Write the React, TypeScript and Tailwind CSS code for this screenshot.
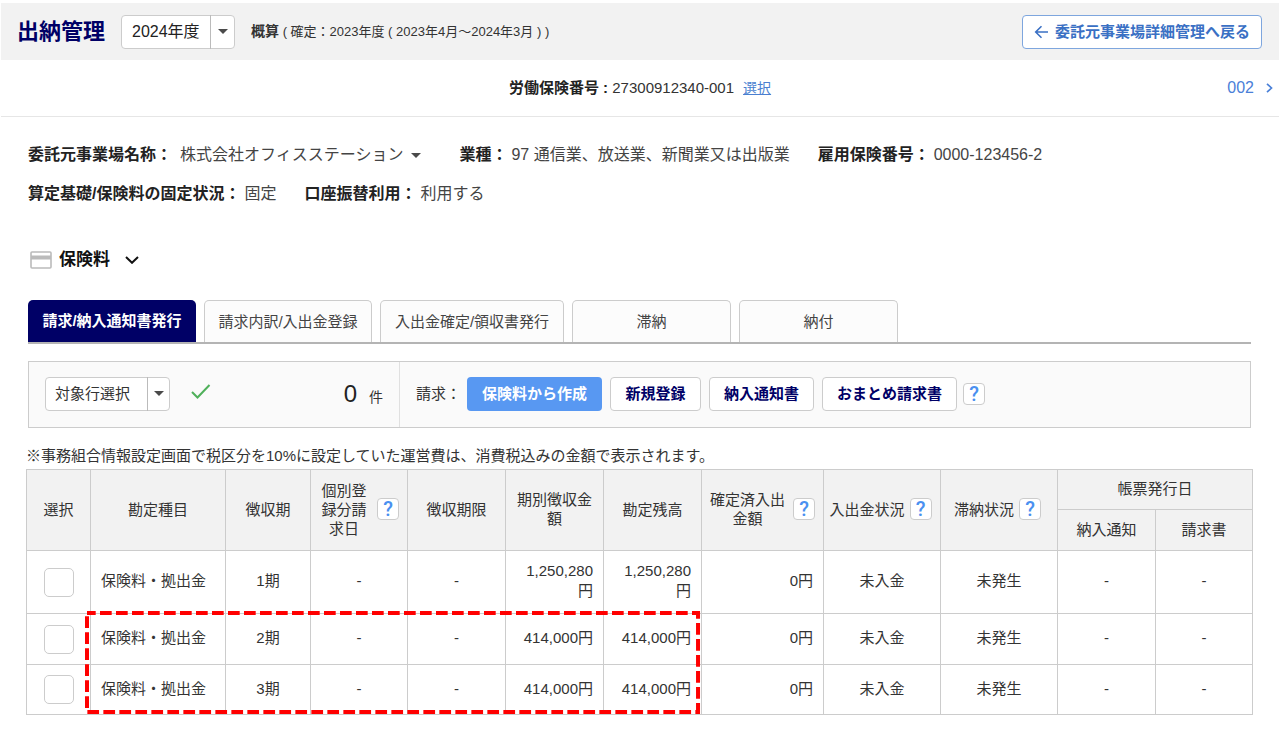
import type { ReactNode } from "react";

const rows = [
  { term: "1期", amount: "1,250,280円", balance: "1,250,280円", height: "h-[63px]" },
  { term: "2期", amount: "414,000円", balance: "414,000円", height: "h-[51px]" },
  { term: "3期", amount: "414,000円", balance: "414,000円", height: "h-[50px]" },
];

const tabs = [
  { label: "請求/納入通知書発行", width: "w-[168px]", active: true },
  { label: "請求内訳/入出金登録", width: "w-[168px]", active: false },
  { label: "入出金確定/領収書発行", width: "w-[184px]", active: false },
  { label: "滞納", width: "w-[159px]", active: false },
  { label: "納付", width: "w-[159px]", active: false },
];

function Caret() {
  return (
    <svg width="10" height="5" viewBox="0 0 10 5" aria-hidden="true">
      <path d="M0 0h10L5 5z" fill="#4a4a4a" />
    </svg>
  );
}

function Picker({ label, value, width, caretWidth, text }: { label: string; value: string; width: string; caretWidth: string; text: string }) {
  return (
    <div className={`relative shrink-0 ${width}`}>
      <select aria-label={label} className={`block h-[34px] w-full appearance-none rounded border border-[#cccccc] bg-white leading-6 ${text}`}>
        <option>{value}</option>
      </select>
      <span className={`pointer-events-none absolute inset-y-0 right-0 flex items-center justify-center border-l border-[#bbbbbb] ${caretWidth}`}>
        <Caret />
      </span>
    </div>
  );
}

function Help() {
  return (
    <button type="button" aria-label="ヘルプ" className="flex h-[22px] w-[22px] shrink-0 items-center justify-center rounded border border-[#cccccc] bg-white font-[Roboto,sans-serif] text-[20px] leading-5 font-medium text-[#4a90f0]">
      ?
    </button>
  );
}

function Field({ label, children }: { label: string; children: ReactNode }) {
  return (
    <div className="flex items-center gap-1">
      <dt className="font-bold text-[#222222]">{label}</dt>
      <dd className="flex items-center text-[#444444]">{children}</dd>
    </div>
  );
}

function ActionButton({ children, width }: { children: ReactNode; width: string }) {
  return (
    <button type="button" className={`h-[34px] rounded border border-[#cccccc] bg-white font-bold text-[#000066] ${width}`}>
      {children}
    </button>
  );
}

function Th({ children, help, rowSpan = 2, colSpan = 1 }: { children: ReactNode; help?: boolean; rowSpan?: number; colSpan?: number }) {
  return (
    <th rowSpan={rowSpan} colSpan={colSpan} className={`border border-[#cccccc] bg-[#f2f2f2] pt-0 pb-[2px] text-center font-normal leading-[19px] ${help ? "pr-2 pl-[5px]" : "px-2"}`}>
      {help ? (
        <div className="flex items-center justify-center gap-[5px]">
          <span>{children}</span>
          <Help />
        </div>
      ) : (
        children
      )}
    </th>
  );
}

function Td({ children, align = "text-center" }: { children: ReactNode; align?: string }) {
  return <td className={`border border-[#cccccc] px-[10px] pt-0 pb-[2px] leading-5 ${align}`}>{children}</td>;
}

export default function App() {
  return (
    <div className="min-h-screen bg-white font-['Liberation_Sans','Noto_Sans_CJK_JP',sans-serif] text-[15px] leading-5 text-[#333333]">
      <header className="mx-px flex h-[60px] items-center border-t-[3px] border-white bg-[#f2f2f2] pr-[17px] pl-4">
        <h1 className="mr-4 text-[22px] leading-7 font-bold text-[#000066]">出納管理</h1>
        <Picker label="年度" value="2024年度" width="w-[114px]" caretWidth="w-[25px]" text="pl-[10px] text-[16px] text-[#222222]" />
        <p className="ml-4 text-[13px]">
          <b className="text-[14px]">概算</b> ( 確定：2023年度 ( 2023年4月～2024年3月 ) )
        </p>
        <a href="#detail" className="ml-auto flex h-[34px] items-center gap-[6px] rounded border border-[#7ea6de] bg-white px-[11px] font-bold text-[#3a70c4]">
          <svg width="15" height="14" viewBox="0 0 15 14" fill="none" stroke="currentColor" strokeWidth="1.6" aria-hidden="true">
            <path d="M14 7H2M7.5 1.2 1.7 7l5.8 5.8" />
          </svg>
          委託元事業場詳細管理へ戻る
        </a>
      </header>

      <nav className="mx-px grid h-[57px] grid-cols-[1fr_auto_1fr] items-center border-b border-[#e6e6e6]">
        <p className="col-start-2">
          <b className="text-[#222222]">労働保険番号 : </b>27300912340-001
          <a href="#select" className="ml-[9px] text-[14px] text-[#4a7fd0] underline">選択</a>
        </p>
        <a href="#next" className="flex items-center gap-3 justify-self-end pr-[6px] text-[16px] text-[#4a80d8]">
          002
          <svg width="7" height="10" viewBox="0 0 7 10" fill="none" stroke="currentColor" strokeWidth="1.7" aria-hidden="true">
            <path d="m1 .8 4.500 4.200L1 9.200" />
          </svg>
        </a>
      </nav>

      <main>
        <dl className="flex flex-col gap-[19px] px-7 pt-7 text-[16px]">
          <div className="flex gap-7">
            <Field label="委託元事業場名称：">
              <button type="button" className="flex items-center gap-2 pr-[10px] pl-1">
                株式会社オフィスステーション
                <Caret />
              </button>
            </Field>
            <Field label="業種：">97 通信業、放送業、新聞業又は出版業</Field>
            <Field label="雇用保険番号：">0000-123456-2</Field>
          </div>
          <div className="flex gap-7">
            <Field label="算定基礎/保険料の固定状況：">固定</Field>
            <Field label="口座振替利用：">利用する</Field>
          </div>
        </dl>

        <h2 className="mt-11 flex h-6 items-center px-[30px] text-[17px] font-bold text-[#111111]">
          <svg width="22" height="18" viewBox="0 0 22 18" fill="none" stroke="#bbbbbb" aria-hidden="true">
            <rect x="1" y="1" width="20" height="16" rx="1" strokeWidth="1.6" />
            <path d="M1 6.5h20" strokeWidth="4" />
          </svg>
          <span className="ml-[7px]">保険料</span>
          <button type="button" aria-label="保険料を開閉" className="ml-[15px]">
            <svg width="14" height="8" viewBox="0 0 14 8" fill="none" stroke="currentColor" strokeWidth="2" aria-hidden="true">
              <path d="m1 1 6 5.8L13 1" />
            </svg>
          </button>
        </h2>

        <div role="tablist" className="mt-7 mr-[29px] ml-7 flex gap-2 border-b-2 border-[#b4b4b4]">
          {tabs.map((tab) => (
            <button
              key={tab.label}
              type="button"
              role="tab"
              aria-selected={tab.active}
              className={`h-[42px] rounded-t-[5px] ${tab.width} ${tab.active ? "bg-[#000066] font-bold text-white" : "border border-b-0 border-[#cccccc] bg-[#fcfcfc] text-[#444444]"}`}
            >
              {tab.label}
            </button>
          ))}
        </div>

        <section className="mt-[17px] mr-[29px] ml-7 flex h-[67px] items-stretch border border-[#cccccc] bg-[#fafafa]">
          <div className="flex w-[371px] items-center border-r border-[#e0e0e0] px-4 pb-[2px]">
            <Picker label="対象行" value="対象行選択" width="w-[125px]" caretWidth="w-[23px]" text="pl-[9px] text-[15px] text-[#333333]" />
            <svg className="mb-1 ml-[21px]" width="20" height="15" viewBox="0 0 20 15" fill="none" stroke="#4fb05a" strokeWidth="2" aria-hidden="true">
              <path d="m1 8 5.500 5.500L18.500 1" />
            </svg>
            <p className="ml-auto flex items-baseline gap-3 text-[14px]">
              <span className="text-[24px] leading-7 text-[#222222]">0</span>件
            </p>
          </div>
          <div className="flex items-center gap-[6px] pb-[2px] pl-4">
            <span className="w-[45px] whitespace-nowrap">請求：</span>
            <div className="flex gap-2">
              <button type="button" className="h-[34px] w-[135px] rounded bg-[#5898f2] font-bold text-white">保険料から作成</button>
              <ActionButton width="w-[91px]">新規登録</ActionButton>
              <ActionButton width="w-[105px]">納入通知書</ActionButton>
              <ActionButton width="w-[135px]">おまとめ請求書</ActionButton>
            </div>
            <Help />
          </div>
        </section>

        <div className="mr-[27px] ml-[26px]">
          <p className="mt-[18px] mb-[3px]">※事務組合情報設定画面で税区分を10%に設定していた運営費は、消費税込みの金額で表示されます。</p>
          <div className="relative">
            <table className="w-full table-fixed border-collapse">
              <colgroup>
                <col className="w-[64px]" />
                <col className="w-[135px]" />
                <col className="w-[85px]" />
                <col className="w-[97px]" />
                <col className="w-[98px]" />
                <col className="w-[98px]" />
                <col className="w-[98px]" />
                <col className="w-[122px]" />
                <col className="w-[117px]" />
                <col className="w-[117px]" />
                <col className="w-[98px]" />
                <col className="w-[97px]" />
              </colgroup>
              <thead>
                <tr className="h-10">
                  <Th>選択</Th>
                  <Th>勘定種目</Th>
                  <Th>徴収期</Th>
                  <Th help>個別登録分請求日</Th>
                  <Th>徴収期限</Th>
                  <Th>期別徴収金額</Th>
                  <Th>勘定残高</Th>
                  <Th help>確定済入出金額</Th>
                  <Th help>入出金状況</Th>
                  <Th help>滞納状況</Th>
                  <Th rowSpan={1} colSpan={2}>帳票発行日</Th>
                </tr>
                <tr className="h-[41px]">
                  <Th rowSpan={1}>納入通知</Th>
                  <Th rowSpan={1}>請求書</Th>
                </tr>
              </thead>
              <tbody>
                {rows.map((row) => (
                  <tr key={row.term} className={row.height}>
                    <td className="border border-[#cccccc] p-0">
                      <input type="checkbox" aria-label={`${row.term}を選択`} className="mx-auto block h-[29px] w-[30px] appearance-none rounded-[5px] border border-[#cccccc] bg-white" />
                    </td>
                    <Td align="text-left">保険料・拠出金</Td>
                    <Td>{row.term}</Td>
                    <Td>-</Td>
                    <Td>-</Td>
                    <Td align="text-right">{row.amount}</Td>
                    <Td align="text-right">{row.balance}</Td>
                    <Td align="text-right">0円</Td>
                    <Td>未入金</Td>
                    <Td>未発生</Td>
                    <Td>-</Td>
                    <Td>-</Td>
                  </tr>
                ))}
              </tbody>
            </table>
            <svg className="pointer-events-none absolute bottom-[3px] left-[5%] h-[99px] w-[49.8%] overflow-visible" aria-hidden="true">
              <rect width="100%" height="100%" fill="none" stroke="#ff0000" strokeWidth="4" strokeDasharray="11.700 4.300" strokeDashoffset="3" />
            </svg>
          </div>
        </div>
      </main>
    </div>
  );
}
